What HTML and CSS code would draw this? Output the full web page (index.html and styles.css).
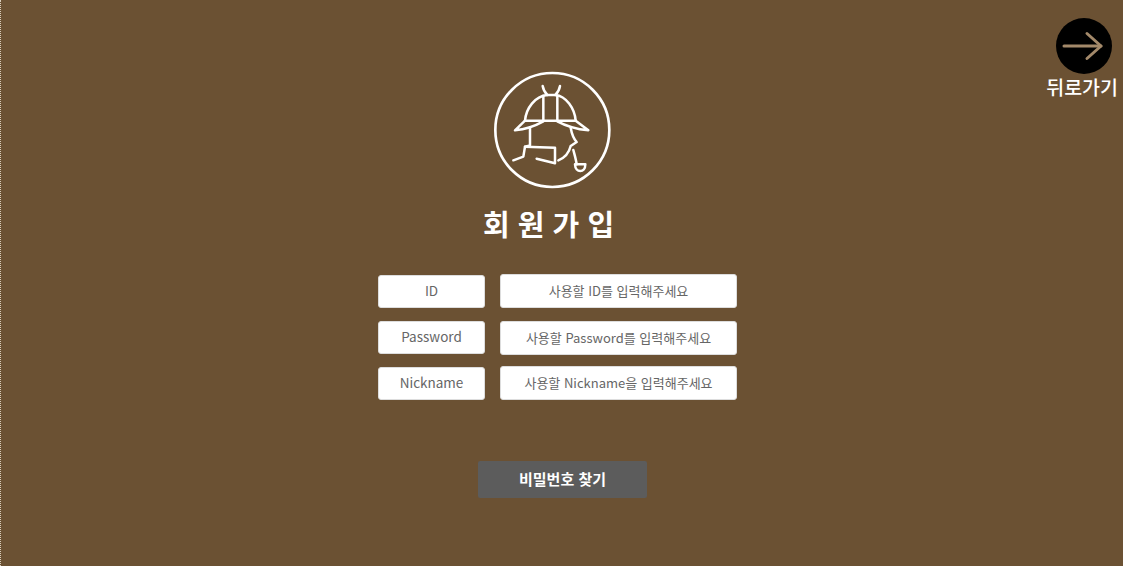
FILE: index.html
```html
<!DOCTYPE html>
<html lang="ko">
<head>
    <meta charset="UTF-8">
    <meta name="viewport" content="width=device-width, initial-scale=1.0">
    <title>회원가입</title>
    <link rel="stylesheet" href="styles.css">
</head>
<body>

<a class="back-link">
    <span class="back-circle">
        <svg width="44" height="30" viewBox="0 0 44 30" fill="none" stroke="#a3896a" stroke-width="3" stroke-linecap="round" stroke-linejoin="round">
            <path d="M2 15H39"/>
            <path d="M25 2.5L39 15L25 27.5"/>
        </svg>
    </span>
    <span class="back-text">뒤로가기</span>
</a>

<div class="signup-container">
    <svg class="logo" width="145" height="140" viewBox="0 0 435 420" fill="none" stroke="#fff" stroke-linecap="round" stroke-linejoin="round">
        <circle cx="217" cy="210" r="171" stroke-width="8"/>
        <g stroke-width="7.5">
            <path d="M188 78C190 90 195 98 202 105"/>
            <path d="M240 78C238 90 233 98 226 105"/>
            <path d="M135 182C138 145 165 108 202 105H226C258 108 284 145 287 182"/>
            <path d="M190 108V182"/>
            <path d="M232 108V182"/>
            <path d="M135 182H287"/>
            <path d="M135 182L105 211C135 208 165 198 190 184"/>
            <path d="M287 182L325 211C295 208 258 198 232 184"/>
            <path d="M150 202V256L135 260L130 290L100 301"/>
            <path d="M135 260L225 263V310L170 296"/>
            <path d="M272 203C275 220 280 235 290 246L272 258C268 275 258 292 235 301"/>
            <path d="M280 270C284 285 288 298 290 313"/>
            <path d="M285 313H316C316 340 286 340 285 313Z"/>
        </g>
    </svg>

    <h2 class="signup-title">회 원 가 입</h2>

    <form class="signup-form">
        <div class="form-row">
            <div class="field-label">ID</div>
            <input class="field-input" type="text" placeholder="사용할 ID를 입력해주세요">
        </div>
        <div class="form-row">
            <div class="field-label">Password</div>
            <input class="field-input field-input-mid" type="text" placeholder="사용할 Password를 입력해주세요">
        </div>
        <div class="form-row">
            <div class="field-label">Nickname</div>
            <input class="field-input" type="text" placeholder="사용할 Nickname을 입력해주세요">
        </div>
    </form>

    <button class="submit-btn" type="button">비밀번호 찾기</button>
</div>

</body>
</html>
```

FILE: styles.css
```css
* {
    box-sizing: border-box;
}

html, body {
    height: 100%;
}

body {
    margin: 0;
    background: #6b5133;
    border-left: 1px dotted #d9cdbb;
    font-family: "Noto Sans CJK KR", "Noto Sans", sans-serif;
    overflow: hidden;
}

.back-link {
    position: absolute;
    top: 18px;
    right: 5px;
    display: flex;
    flex-direction: column;
    align-items: center;
}

.back-circle {
    display: flex;
    justify-content: center;
    align-items: center;
    width: 56px;
    height: 56px;
    margin-left: 3px;
    border-radius: 50%;
    background: #000;
}

.back-text {
    color: #fff;
    font-size: 19.5px;
    font-weight: 500;
    line-height: 26px;
}

.signup-container {
    display: flex;
    flex-direction: column;
    align-items: flex-start;
    padding: 60px 0 0 479px;
}

.logo {
    display: block;
}

.signup-title {
    margin: 2px 0 1px 3px;
    color: #fff;
    font-size: 29px;
    font-weight: 700;
    line-height: 43px;
}

.signup-form {
    display: flex;
    flex-direction: column;
    gap: 12px;
    margin: 28px 0 0 -102px;
}

.form-row {
    display: flex;
    align-items: flex-start;
    gap: 15px;
    height: 34px;
}

.field-label {
    width: 107px;
    height: 33px;
    margin-top: 1px;
    border: 1px solid #ddd;
    border-radius: 3px;
    background: #fff;
    color: #666;
    font-size: 13.5px;
    line-height: 28px;
    text-align: center;
}

.field-input {
    width: 237px;
    height: 34px;
    padding: 0 0 2px;
    border: 1px solid #ddd;
    border-radius: 3px;
    background: #fff;
    font-family: inherit;
    font-size: 13px;
    text-align: center;
}

.field-input-mid {
    margin-top: 1px;
}

.field-input::placeholder {
    color: #666;
    opacity: 1;
}

.submit-btn {
    width: 169px;
    height: 37px;
    margin: 61px 0 0 -2px;
    padding: 0 0 2px;
    border: none;
    border-radius: 2px;
    background: #5c5c5c;
    color: #fff;
    font-family: inherit;
    font-size: 15px;
    font-weight: 700;
}
```
